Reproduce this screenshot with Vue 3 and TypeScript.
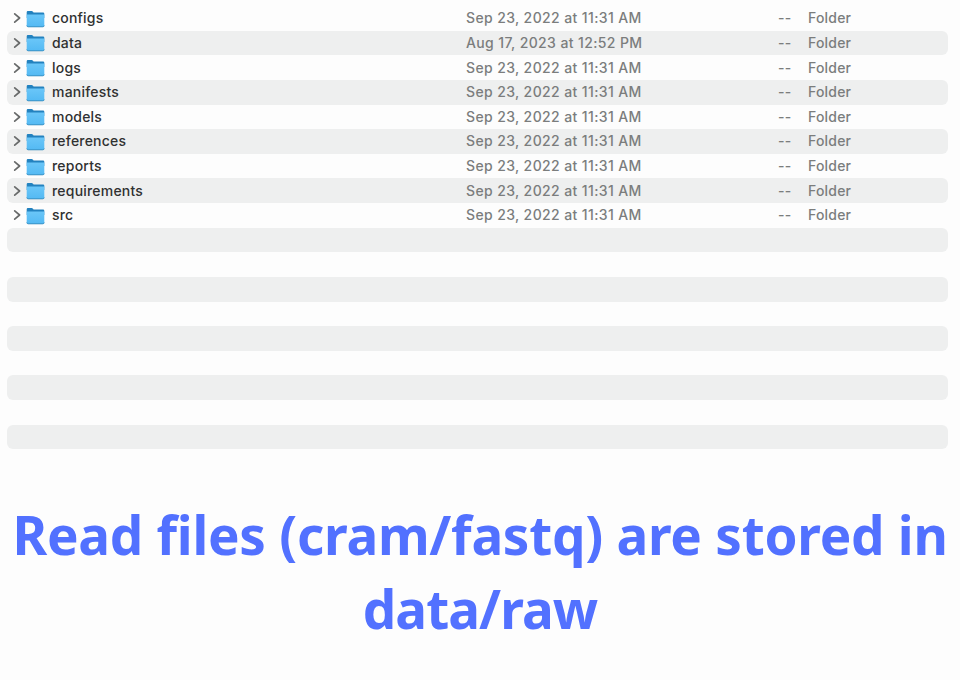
<script setup lang="ts">
interface Entry {
  name: string
  modified: string
}

const usual = 'Sep 23, 2022 at 11:31 AM'
const entries: Entry[] = [
  { name: 'configs', modified: usual },
  { name: 'data', modified: 'Aug 17, 2023 at 12:52 PM' },
  { name: 'logs', modified: usual },
  { name: 'manifests', modified: usual },
  { name: 'models', modified: usual },
  { name: 'references', modified: usual },
  { name: 'reports', modified: usual },
  { name: 'requirements', modified: usual },
  { name: 'src', modified: usual },
]
const blankRows = 9
</script>

<template>
  <main class="page">
    <svg class="defs" width="0" height="0" aria-hidden="true">
      <defs>
        <linearGradient id="folderFront" x1="0" y1="0" x2="0" y2="1">
          <stop offset="0" stop-color="#6ac6f8" />
          <stop offset="1" stop-color="#53b9f3" />
        </linearGradient>
      </defs>
    </svg>
    <section class="list">
      <div v-for="entry in entries" :key="entry.name" class="row">
        <svg class="chevron" viewBox="0 0 8 12">
          <path d="M1.7 1.9 L6.6 6 L1.7 10.1" />
        </svg>
        <svg class="folder" viewBox="0 0 19 18">
          <path d="M.7 2.2 Q.7 1 1.9 1 H5.6 Q6.4 1 7 1.7 L7.6 2.4 H17.1 Q18.3 2.4 18.3 3.7 V8 H.7 Z" fill="#2382bf" />
          <path d="M.7 4.6 H18.3 V15.6 Q18.3 17 16.9 17 H2.1 Q.7 17 .7 15.6 Z" fill="url(#folderFront)" />
          <path d="M.8 15.5 Q.9 16.8 2.2 16.8 H16.8 Q18.1 16.8 18.2 15.5" fill="none" stroke="#398dc0" stroke-width=".9" />
        </svg>
        <span class="name">{{ entry.name }}</span>
        <span class="modified">{{ entry.modified }}</span>
        <span class="size">--</span>
        <span class="kind">Folder</span>
      </div>
      <div v-for="n in blankRows" :key="n" class="row"></div>
    </section>
    <h1 class="caption">Read files (cram/fastq) are stored in<br /><span class="path">data/raw</span></h1>
  </main>
</template>

<style>
body {
  background: #fdfdfd;
}
</style>

<style scoped>
.page {
  box-sizing: border-box;
  width: 960px;
  height: 680px;
  padding-top: 6px;
  background: #fdfdfd;
  overflow: hidden;
}
.defs {
  display: block;
}
.list {
  padding: 0 12px 0 7px;
}
.row {
  display: grid;
  grid-template-columns: 19px 26px 414px 300px 42px 1fr;
  align-items: center;
  height: 24.63px;
  border-radius: 6px;
  color: #7b7d7d;
  font: 450 14px/24px Inter, 'Liberation Sans', sans-serif;
  white-space: nowrap;
}
.row:nth-child(even) {
  background: #eeefef;
}
.chevron {
  width: 8px;
  height: 12px;
  margin-left: 6px;
}
.chevron path {
  fill: none;
  stroke: #686a6a;
  stroke-width: 1.7;
  stroke-linecap: round;
  stroke-linejoin: round;
}
.folder {
  width: 19px;
  height: 18px;
  margin-top: 1px;
}
.name {
  color: #303131;
  letter-spacing: 0.2px;
}
.modified {
  letter-spacing: 0.38px;
}
.size {
  padding-left: 12px;
  letter-spacing: 0.4px;
}
.kind {
  letter-spacing: 0.2px;
}
.caption {
  margin: 49px 0 0;
  color: #5271ff;
  font: 700 53px/74px 'Noto Sans', 'Open Sans', sans-serif;
  letter-spacing: -0.25px;
  text-align: center;
  white-space: nowrap;
}
.path {
  letter-spacing: -0.9px;
}
</style>
